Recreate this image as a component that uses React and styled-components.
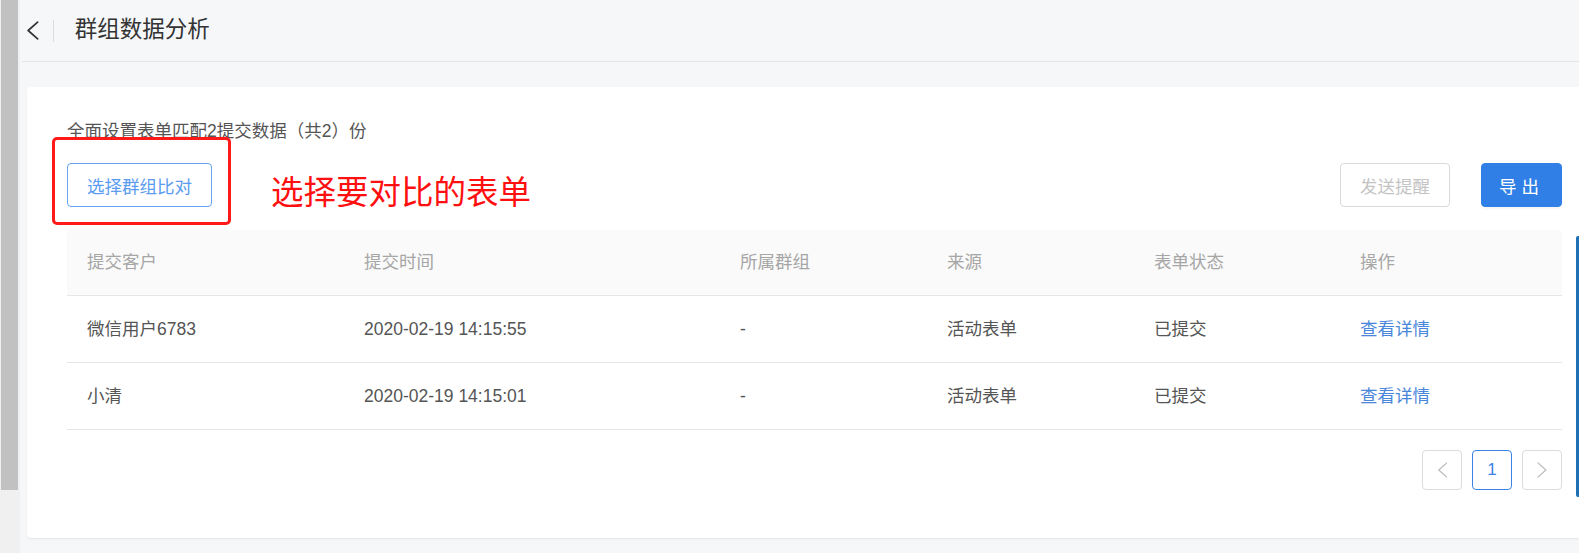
import React from 'react';
import styled, { createGlobalStyle } from 'styled-components';

const GlobalStyle = createGlobalStyle`
  html, body {
    margin: 0;
    padding: 0;
    background: #f6f7f9;
    font-family: "Liberation Sans", "Noto Sans CJK SC", sans-serif;
    overflow: hidden;
  }
`;

const Page = styled.div`
  display: flex;
  width: 1579px;
  height: 553px;
  background: #f6f7f9;
  position: relative;
  overflow: hidden;
`;

const Rail = styled.div`
  flex: 0 0 20px;
  background: #f0f0f0;
  padding-left: 1px;
  box-sizing: border-box;
`;

const Thumb = styled.div`
  width: 17px;
  height: 490px;
  background: #c1c1c1;
`;

const Main = styled.div`
  flex: 1;
  min-width: 0;
  padding-left: 2px;
`;

const Header = styled.div`
  display: flex;
  align-items: center;
  height: 61px;
  border-bottom: 1px solid #e3e5e8;
`;

const Back = styled.div`
  display: flex;
  align-items: center;
  padding: 0 14px 0 4px;
  color: #333;
`;

const Divider = styled.div`
  width: 1px;
  height: 22px;
  background: #dcdcdc;
`;

const Title = styled.h1`
  margin: 0 0 0 21px;
  font-size: 22.5px;
  font-weight: 400;
  color: #333;
  line-height: 1;
`;

const Card = styled.div`
  margin: 25px 0 0 5px;
  height: 451px;
  background: #fff;
  border-radius: 4px 0 0 4px;
  box-shadow: 0 1px 2px rgba(0, 0, 0, 0.08);
  padding: 33px 17px 0 40px;
  box-sizing: border-box;
`;

const Summary = styled.div`
  font-size: 17.5px;
  line-height: 22px;
  color: #555;
`;

const Toolbar = styled.div`
  display: flex;
  align-items: center;
  margin-top: 19px;
`;

const Highlight = styled.div`
  position: relative;
`;

const RedFrame = styled.div`
  position: absolute;
  left: -15px;
  top: -26px;
  width: 179px;
  height: 88px;
  border: 3px solid #ff1a1a;
  border-radius: 5px;
  box-sizing: border-box;
  pointer-events: none;
`;

const Button = styled.button`
  height: 44px;
  padding: 0 ${p => p.$pad || 19}px;
  font-family: inherit;
  font-size: 17.5px;
  border-radius: 4px;
  box-sizing: border-box;
  cursor: pointer;
  border: 1px solid ${p => p.$border};
  background: ${p => p.$bg || '#fff'};
  color: ${p => p.$color};
  letter-spacing: ${p => p.$spacing || 0}px;
  box-shadow: ${p => (p.$primary ? '0 2px 2px rgba(0,0,0,0.04)' : 'none')};
`;

const Note = styled.span`
  margin: 16px 0 0 59px;
  font-size: 32.5px;
  color: #ff1010;
  line-height: 1;
`;

const Spacer = styled.div`
  flex: 1;
`;

const Actions = styled.div`
  display: flex;
  gap: 31px;
`;

const Table = styled.div`
  margin-top: 20px;
`;

const Row = styled.div`
  display: grid;
  grid-template-columns: 277px 376px 207px 207px 206px 1fr;
  align-items: center;
  height: ${p => p.$h}px;
  border-bottom: 1px solid #e6e6e6;
  background: ${p => (p.$head ? '#fafafa' : '#fff')};
  border-radius: ${p => (p.$head ? '4px 4px 0 0' : '0')};
`;

const Cell = styled.div`
  padding-left: 20px;
  font-size: 17.5px;
  line-height: 22px;
  color: ${p => (p.$head ? '#a6a6a6' : p.$link ? '#4a86d9' : '#555')};
  cursor: ${p => (p.$link ? 'pointer' : 'default')};
`;

const Pager = styled.div`
  display: flex;
  justify-content: flex-end;
  gap: 10px;
  margin-top: 20px;
`;

const PageBox = styled.div`
  width: 40px;
  height: 40px;
  box-sizing: border-box;
  display: flex;
  align-items: center;
  justify-content: center;
  border-radius: 4px;
  border: 1px solid ${p => (p.$active ? '#3b84e6' : '#dcdcdc')};
  color: ${p => (p.$active ? '#3b84e6' : '#bbb')};
  font-size: 17px;
`;

const EdgeBar = styled.div`
  position: absolute;
  right: 0;
  top: 236px;
  width: 3px;
  height: 261px;
  background: #1f6fb5;
  border-radius: 2px 0 0 2px;
`;

const Chevron = ({ dir = 'left', size = 18, color = 'currentColor', width = 1.6 }) => (
  <svg width={size * 0.67} height={size} viewBox="0 0 12 18" fill="none">
    <path
      d={dir === 'left' ? 'M11 1 L2 9 L11 17' : 'M1 1 L10 9 L1 17'}
      stroke={color}
      strokeWidth={width}
      strokeLinecap="round"
      strokeLinejoin="round"
    />
  </svg>
);

const columns = ['提交客户', '提交时间', '所属群组', '来源', '表单状态', '操作'];

const rows = [
  { name: '微信用户6783', time: '2020-02-19 14:15:55' },
  { name: '小清', time: '2020-02-19 14:15:01' },
];

export default function App() {
  return (
    <>
      <GlobalStyle />
      <Page>
        <Rail>
          <Thumb />
        </Rail>
        <Main>
          <Header>
            <Back>
              <Chevron size={19} />
            </Back>
            <Divider />
            <Title>群组数据分析</Title>
          </Header>
          <Card>
            <Summary>全面设置表单匹配2提交数据（共2）份</Summary>
            <Toolbar>
              <Highlight>
                <RedFrame />
                <Button $border="#64a3f0" $color="#5b9cf0">选择群组比对</Button>
              </Highlight>
              <Note>选择要对比的表单</Note>
              <Spacer />
              <Actions>
                <Button $border="#d9d9d9" $color="#c4c4c4">发送提醒</Button>
                <Button $primary $border="#2f7fe6" $bg="#2f7fe6" $color="#fff" $pad={17} $spacing={5}>
                  导出
                </Button>
              </Actions>
            </Toolbar>
            <Table>
              <Row $head $h={65}>
                {columns.map(c => (
                  <Cell key={c} $head>{c}</Cell>
                ))}
              </Row>
              {rows.map(r => (
                <Row key={r.name} $h={66}>
                  <Cell>{r.name}</Cell>
                  <Cell>{r.time}</Cell>
                  <Cell>-</Cell>
                  <Cell>活动表单</Cell>
                  <Cell>已提交</Cell>
                  <Cell $link>查看详情</Cell>
                </Row>
              ))}
            </Table>
            <Pager>
              <PageBox>
                <Chevron size={16} color="#bbb" width={1.4} />
              </PageBox>
              <PageBox $active>1</PageBox>
              <PageBox>
                <Chevron dir="right" size={16} color="#bbb" width={1.4} />
              </PageBox>
            </Pager>
          </Card>
        </Main>
        <EdgeBar />
      </Page>
    </>
  );
}
